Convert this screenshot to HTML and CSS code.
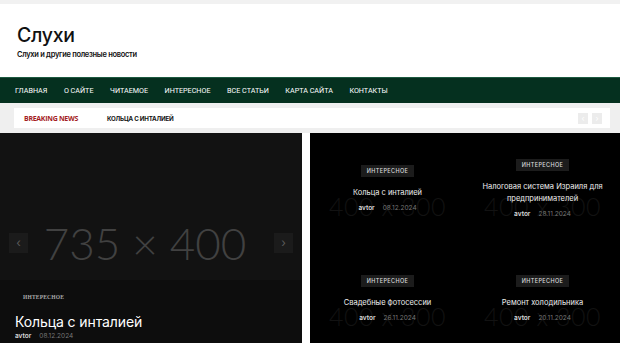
FILE: index.html
```html
<!DOCTYPE html>
<html lang="ru">
<head>
    <meta charset="UTF-8">
    <meta name="viewport" content="width=device-width, initial-scale=1.0">
    <title>Слухи</title>
    <link rel="stylesheet" href="styles.css">
</head>
<body>

<div class="top-strip"></div>

<header class="site-header">
    <div class="site-title">Слухи</div>
    <div class="site-desc">Слухи и другие полезные новости</div>
</header>

<nav class="navbar">
    <a href="#" class="nav-link">Главная</a>
    <a href="#" class="nav-link">О сайте</a>
    <a href="#" class="nav-link">Читаемое</a>
    <a href="#" class="nav-link">Интересное</a>
    <a href="#" class="nav-link">Все статьи</a>
    <a href="#" class="nav-link">Карта сайта</a>
    <a href="#" class="nav-link">Контакты</a>
</nav>

<div class="ticker-wrap">
    <div class="ticker">
        <span class="ticker-label">BREAKING NEWS</span>
        <span class="ticker-item">Кольца с инталией</span>
        <div class="ticker-nav">
            <span class="ticker-btn">&lsaquo;</span>
            <span class="ticker-btn">&rsaquo;</span>
        </div>
    </div>
</div>

<main class="featured">
    <!-- Большой слайдер -->
    <section class="slider">
        <div class="slider-image">
            <span class="slider-arrow">&lsaquo;</span>
            <span class="placeholder-big">735 × 400</span>
            <span class="slider-arrow">&rsaquo;</span>
        </div>
        <div class="slider-caption">
            <div class="slider-cat">Интересное</div>
            <div class="slider-title">Кольца с инталией</div>
            <div class="meta"><b>avtor</b><span>08.12.2024</span></div>
        </div>
    </section>

    <!-- Сетка 2x2 -->
    <section class="grid">
        <div class="cell">
            <span class="placeholder">400 x 300</span>
            <span class="badge">Интересное</span>
            <div class="cell-title">Кольца с инталией</div>
            <div class="meta"><b>avtor</b><span>08.12.2024</span></div>
        </div>
        <div class="cell">
            <span class="placeholder">400 x 300</span>
            <span class="badge">Интересное</span>
            <div class="cell-title">Налоговая система Израиля для предпринимателей</div>
            <div class="meta"><b>avtor</b><span>28.11.2024</span></div>
        </div>
        <div class="cell">
            <span class="placeholder">400 x 300</span>
            <span class="badge">Интересное</span>
            <div class="cell-title">Свадебные фотосессии</div>
            <div class="meta"><b>avtor</b><span>26.11.2024</span></div>
        </div>
        <div class="cell">
            <span class="placeholder">400 x 300</span>
            <span class="badge">Интересное</span>
            <div class="cell-title">Ремонт холодильника</div>
            <div class="meta"><b>avtor</b><span>20.11.2024</span></div>
        </div>
    </section>
</main>

</body>
</html>
```

FILE: styles.css
```css
/* General styles */
body {
    font-family: Inter, "Liberation Sans", sans-serif;
    background-color: #fff;
    margin: 0;
    padding: 0;
    overflow: hidden;
}

.top-strip {
    height: 4px;
    background-color: #f1f1f1;
}

/* Header */
.site-header {
    height: 73px;
    padding-left: 17px;
    box-sizing: border-box;
    padding-top: 19px;
}

.site-title {
    font-size: 19.5px;
    line-height: 24px;
    color: #111;
    font-weight: 500;
    letter-spacing: -0.3px;
}

.site-desc {
    font-size: 7.5px;
    font-weight: 600;
    color: #111;
    margin-top: 3px;
    letter-spacing: -0.3px;
}

/* Navbar */
.navbar {
    background-color: #05301f;
    border-top: 1px solid #1d5a40;
    height: 25px;
    display: flex;
    align-items: center;
    padding-left: 15px;
}

.navbar .nav-link {
    font-family: Roboto, "Liberation Sans", sans-serif;
    color: #fff;
    text-decoration: none;
    text-transform: uppercase;
    font-size: 7.2px;
    margin-right: 16.5px;
}

/* Breaking news */
.ticker-wrap {
    background-color: #efefef;
    padding: 5px 10px 5px 14px;
    height: 20px;
}

.ticker {
    background-color: #fff;
    height: 20px;
    display: flex;
    align-items: center;
    padding-left: 10px;
    padding-right: 8px;
}

.ticker-label {
    color: #a41d24;
    font-family: "Open Sans", sans-serif;
    font-weight: 700;
    font-size: 7px;
    letter-spacing: -0.3px;
    width: 83px;
}

.ticker-item {
    font-size: 6.2px;
    font-weight: 700;
    text-transform: uppercase;
    color: #111;
    letter-spacing: -0.2px;
}

.ticker-nav {
    margin-left: auto;
    display: flex;
    gap: 4px;
}

.ticker-btn {
    width: 10px;
    height: 11px;
    background-color: #ececec;
    color: #fff;
    font-size: 8px;
    line-height: 11px;
    text-align: center;
}

/* Featured area */
.featured {
    display: flex;
    gap: 8px;
    height: 210px;
}

.slider {
    width: 302px;
    background-color: #121212;
    display: flex;
    flex-direction: column;
}

.slider-image {
    height: 147px;
    box-sizing: border-box;
    display: flex;
    align-items: center;
    justify-content: space-between;
    padding: 73px 9px 0 9px;
}

.slider-arrow {
    width: 19px;
    height: 20px;
    background-color: #1b1b1b;
    color: #5a5a5a;
    font-size: 12px;
    line-height: 19px;
    text-align: center;
}

.placeholder-big {
    font-family: Lato, sans-serif;
    font-weight: 300;
    font-size: 44px;
    line-height: 44px;
    color: #414141;
    margin-left: -12px;
}

.slider-caption {
    flex: 1;
    background-color: #0d0d0d;
    padding: 14px 15px 0 15px;
}

.slider-cat {
    font-family: "Liberation Serif", serif;
    font-size: 5.5px;
    line-height: 7px;
    font-weight: 700;
    text-transform: uppercase;
    color: #aaa;
    margin-left: 8px;
    letter-spacing: 0.2px;
}

.slider-title {
    color: #fff;
    font-size: 14px;
    margin-top: 12px;
    line-height: 18px;
    letter-spacing: -0.1px;
}

.meta {
    font-size: 6.5px;
    line-height: 8px;
    color: #777;
    margin-top: 1px;
}

.meta b {
    color: #ddd;
    font-weight: 600;
    margin-right: 8px;
}

/* Grid 2x2 */
.grid {
    flex: 1;
    background-color: #000;
    display: grid;
    grid-template-columns: 1fr 1fr;
    grid-auto-rows: 110px;
}

.cell {
    position: relative;
    display: flex;
    flex-direction: column;
    align-items: center;
    justify-content: center;
    text-align: center;
    padding: 0 12px;
    overflow: hidden;
}

.placeholder {
    position: absolute;
    left: 0;
    right: 0;
    top: 58px;
    font-family: Lato, sans-serif;
    font-weight: 300;
    font-size: 25px;
    color: #121212;
    letter-spacing: 0.5px;
}

.badge {
    position: relative;
    background-color: #1c1c1c;
    color: #ddd;
    font-size: 5.5px;
    text-transform: uppercase;
    letter-spacing: 0.4px;
    padding: 3px 6px;
    font-weight: 500;
}

.cell-title {
    position: relative;
    color: #eee;
    font-size: 7.5px;
    line-height: 12px;
    margin-top: 10px;
}

.cell .meta {
    position: relative;
    margin-top: 5px;
}
```
